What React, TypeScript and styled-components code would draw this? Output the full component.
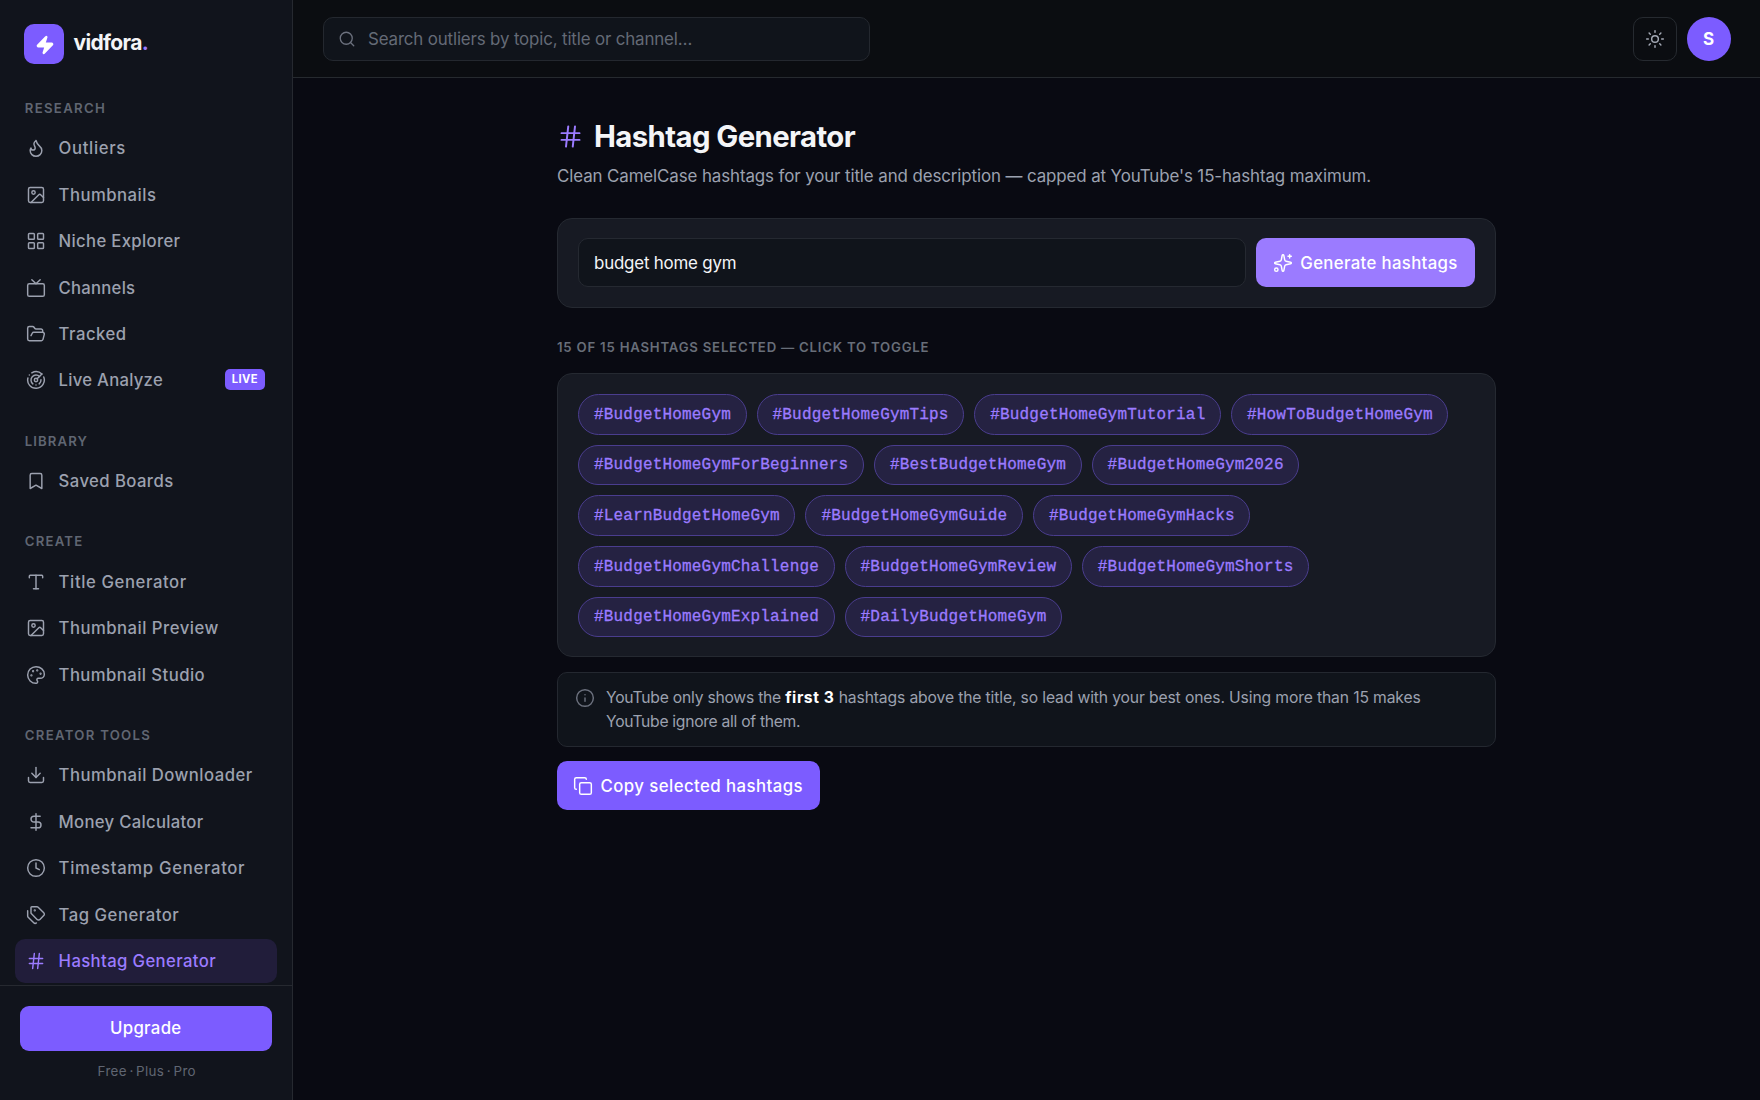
import React, { useState } from "react";
import styled, { createGlobalStyle } from "styled-components";
import {
  Bookmark,
  Clock,
  Copy,
  DollarSign,
  Download,
  Flame,
  FolderOpen,
  Hash,
  Image,
  Info,
  LayoutGrid,
  LucideIcon,
  Palette,
  Radar,
  Search,
  Sparkles,
  Sun,
  Tags,
  Tv,
  Type,
  Zap,
} from "lucide-react";

const GlobalStyle = createGlobalStyle`
  * { box-sizing: border-box; }
  body {
    margin: 0;
    background: #090a12;
    color: #f4f5f7;
    font-family: Inter, "Liberation Sans", sans-serif;
    overflow: hidden;
  }
  button, input { font-family: inherit; margin: 0; }
`;

const Shell = styled.div`
  display: grid;
  grid-template-columns: 293px 1fr;
  width: 100%;
  height: 1100px;
  overflow: hidden;
`;

/* ---------- Sidebar ---------- */

const Sidebar = styled.aside`
  display: flex;
  flex-direction: column;
  min-height: 0;
  height: 1100px;
  background: #11141c;
  border-right: 1px solid #262930;
`;

const Brand = styled.div`
  display: flex;
  align-items: center;
  gap: 9.5px;
  padding: 24px 24px 0;
`;

const BrandMark = styled.div`
  display: grid;
  place-items: center;
  width: 40px;
  height: 40px;
  padding: 1px 0 0 1px;
  border-radius: 10px;
  background: #7c5cff;
  color: #fff;
`;

const BrandName = styled.div`
  font-size: 21px;
  font-weight: 700;
  line-height: 26px;
  letter-spacing: -0.65px;
  padding-bottom: 2px;
  span { color: #9b7bff; }
`;

const Nav = styled.nav`
  flex: 1;
  min-height: 0;
  overflow: hidden;
  padding: 33.7px 15px 0;
`;

const Group = styled.section`
  margin-bottom: 28.2px;
`;

const GroupLabel = styled.h2<{ $track: number }>`
  margin: 0;
  padding: 0 0 7px 9.8px;
  height: 28.5px;
  font-size: 13.2px;
  font-weight: 600;
  line-height: 21.4px;
  letter-spacing: ${(p) => p.$track}px;
  color: #606672;
`;

const NavItem = styled.a<{ $active?: boolean; $track: number }>`
  display: flex;
  align-items: center;
  gap: 12.4px;
  height: 44px;
  margin-bottom: 2.44px;
  padding: 0 12px 0 11.2px;
  border-radius: 10px;
  font-size: 16.7px;
  font-weight: 500;
  letter-spacing: ${(p) => p.$track}px;
  white-space: nowrap;
  color: ${(p) => (p.$active ? "#9b7bff" : "#9ca1af")};
  background: ${(p) => (p.$active ? "#211d3a" : "transparent")};
  svg { flex: none; }
`;

const LiveBadge = styled.span`
  margin-left: auto;
  margin-top: -1px;
  padding: 0 7px 1px;
  border-radius: 5px;
  background: #7c5cff;
  color: #fff;
  font-size: 11.2px;
  font-weight: 700;
  line-height: 20px;
  letter-spacing: 0.4px;
`;

const SidebarFooter = styled.div`
  height: 115px;
  padding: 20px 20px 0 19.5px;
  border-top: 1px solid #262930;
  text-align: center;
`;

const UpgradeButton = styled.button`
  display: block;
  width: 100%;
  height: 45px;
  padding: 0 0 1px;
  border: 0;
  border-radius: 9px;
  background: #7c5cff;
  color: #fff;
  font-size: 16.8px;
  font-weight: 550;
  letter-spacing: 0.3px;
`;

const PlanNote = styled.div`
  margin-top: 10px;
  padding-left: 2px;
  font-size: 13.4px;
  line-height: 20px;
  letter-spacing: 0.35px;
  word-spacing: -1.6px;
  color: #606672;
`;

/* ---------- Top bar ---------- */

const Main = styled.div`
  display: flex;
  flex-direction: column;
  min-width: 0;
`;

const TopBar = styled.header`
  display: flex;
  align-items: center;
  justify-content: space-between;
  height: 78px;
  flex: none;
  padding: 0 29.5px 0 30px;
  background: #0b0d11;
  border-bottom: 1px solid #262a2f;
`;

const SearchBox = styled.label`
  display: flex;
  align-items: center;
  gap: 12.5px;
  width: 547px;
  height: 44px;
  padding: 0 13.5px;
  border: 1px solid #24282f;
  border-radius: 10px;
  background: #10141b;
  color: #6c717e;
`;

const SearchInput = styled.input`
  flex: 1;
  min-width: 0;
  padding: 1px 0 0;
  border: 0;
  outline: 0;
  background: none;
  color: #f4f5f7;
  font-size: 16.9px;
  letter-spacing: -0.15px;
  &::placeholder { color: #646a76; opacity: 1; }
`;

const Actions = styled.div`
  display: flex;
  gap: 10px;
`;

const ThemeButton = styled.button`
  display: grid;
  place-items: center;
  width: 44px;
  height: 44px;
  padding: 0;
  border: 1px solid #262a30;
  border-radius: 10px;
  background: none;
  color: #a4a9b5;
`;

const Avatar = styled.div`
  display: grid;
  place-items: center;
  width: 44px;
  height: 44px;
  border-radius: 50%;
  background: #7c5cff;
  font-size: 17px;
  font-weight: 700;
  color: #fff;
`;

/* ---------- Page ---------- */

const Page = styled.main`
  width: 939px;
  margin: 0 auto;
  padding-top: 39px;
`;

const Title = styled.h1`
  display: flex;
  align-items: center;
  gap: 10px;
  margin: 0;
  height: 40px;
  font-size: 29.3px;
  font-weight: 700;
  line-height: 40px;
  letter-spacing: -0.58px;
  svg { color: #9b7bff; margin-top: -1px; }
`;

const Subtitle = styled.p`
  margin: 7px 0 0;
  font-size: 16.9px;
  line-height: 25px;
  letter-spacing: -0.1px;
  white-space: nowrap;
  color: #9ca1af;
`;

const Card = styled.section`
  padding: 20px;
  border: 1px solid #252931;
  border-radius: 15px;
  background: #171a23;
`;

const FormCard = styled(Card)`
  display: flex;
  gap: 10px;
  margin-top: 29px;
  height: 90px;
  padding: 19px 20px;
`;

const TopicInput = styled.input`
  flex: 1;
  min-width: 0;
  height: 49px;
  padding: 0 15px;
  border: 1px solid #252931;
  border-radius: 10px;
  outline: 0;
  background: #10141b;
  color: #f4f5f7;
  font-size: 16.9px;
  letter-spacing: -0.2px;
`;

const Button = styled.button<{ $tone: string; $width: number; $track: number }>`
  display: flex;
  align-items: center;
  justify-content: center;
  gap: 7px;
  width: ${(p) => p.$width}px;
  height: 49px;
  padding: 0;
  border: 0;
  border-radius: 10px;
  background: ${(p) => p.$tone};
  color: #fff;
  font-size: 16.8px;
  font-weight: 550;
  letter-spacing: ${(p) => p.$track}px;
  white-space: nowrap;
`;

const ResultLabel = styled.h2`
  margin: 29px 0 16px;
  font-size: 13.2px;
  font-weight: 600;
  line-height: 20px;
  letter-spacing: 0.78px;
  color: #686e79;
`;

const ChipCard = styled(Card)`
  display: flex;
  flex-wrap: wrap;
  gap: 10px;
  height: 284px;
  align-content: flex-start;
`;

const Chip = styled.button<{ $on: boolean }>`
  height: 40.65px;
  padding: 0.6px 14.6px 0 15px;
  border: 1px solid ${(p) => (p.$on ? "#4a3d8e" : "#2b2f38")};
  border-radius: 21px;
  background: ${(p) => (p.$on ? "#252242" : "transparent")};
  color: ${(p) => (p.$on ? "#9b7bff" : "#9ca1af")};
  font-family: "Liberation Mono", monospace;
  font-size: 16px;
  letter-spacing: 0.18px;
  -webkit-text-stroke: 0.3px currentColor;
`;

const Note = styled.div`
  display: flex;
  gap: 11px;
  height: 75px;
  margin-top: 15px;
  padding: 12.5px 17px;
  border: 1px solid #242830;
  border-radius: 10px;
  background: #10141b;
  color: #9ca1af;
  font-size: 15.7px;
  line-height: 24.6px;
  svg { flex: none; margin-top: 2px; color: #6c717e; }
  p { margin: 0; }
  strong { font-weight: 700; letter-spacing: 0.55px; color: #fff; }
`;

const Run = styled.span<{ $track: number }>`
  letter-spacing: ${(p) => p.$track}px;
`;

const CopyRow = styled.div`
  margin-top: 14px;
`;

type Item = { icon: LucideIcon; text: string; track: number; live?: boolean; active?: boolean };

const groups: { label: string; track: number; items: Item[] }[] = [
  {
    label: "RESEARCH",
    track: 1.3,
    items: [
      { icon: Flame, text: "Outliers", track: 0.65 },
      { icon: Image, text: "Thumbnails", track: 0.48 },
      { icon: LayoutGrid, text: "Niche Explorer", track: 0.33 },
      { icon: Tv, text: "Channels", track: 0.24 },
      { icon: FolderOpen, text: "Tracked", track: 0.5 },
      { icon: Radar, text: "Live Analyze", track: 0.26, live: true },
    ],
  },
  {
    label: "LIBRARY",
    track: 1.08,
    items: [{ icon: Bookmark, text: "Saved Boards", track: 0.42 }],
  },
  {
    label: "CREATE",
    track: 1.2,
    items: [
      { icon: Type, text: "Title Generator", track: 0.6 },
      { icon: Image, text: "Thumbnail Preview", track: 0.48 },
      { icon: Palette, text: "Thumbnail Studio", track: 0.43 },
    ],
  },
  {
    label: "CREATOR TOOLS",
    track: 1.28,
    items: [
      { icon: Download, text: "Thumbnail Downloader", track: 0.47 },
      { icon: DollarSign, text: "Money Calculator", track: 0.29 },
      { icon: Clock, text: "Timestamp Generator", track: 0.69 },
      { icon: Tags, text: "Tag Generator", track: 0.52 },
      { icon: Hash, text: "Hashtag Generator", track: 0.38, active: true },
    ],
  },
];

const hashtags = [
  "#BudgetHomeGym",
  "#BudgetHomeGymTips",
  "#BudgetHomeGymTutorial",
  "#HowToBudgetHomeGym",
  "#BudgetHomeGymForBeginners",
  "#BestBudgetHomeGym",
  "#BudgetHomeGym2026",
  "#LearnBudgetHomeGym",
  "#BudgetHomeGymGuide",
  "#BudgetHomeGymHacks",
  "#BudgetHomeGymChallenge",
  "#BudgetHomeGymReview",
  "#BudgetHomeGymShorts",
  "#BudgetHomeGymExplained",
  "#DailyBudgetHomeGym",
];

export default function App() {
  const [off, setOff] = useState<string[]>([]);
  const toggle = (tag: string) =>
    setOff((cur) => (cur.includes(tag) ? cur.filter((t) => t !== tag) : [...cur, tag]));

  return (
    <>
      <GlobalStyle />
      <Shell>
        <Sidebar>
          <Brand>
            <BrandMark>
              <Zap size={20} strokeWidth={2} fill="currentColor" />
            </BrandMark>
            <BrandName>
              vidfora<span>.</span>
            </BrandName>
          </Brand>
          <Nav>
            {groups.map((group) => (
              <Group key={group.label}>
                <GroupLabel $track={group.track}>{group.label}</GroupLabel>
                {group.items.map(({ icon: Icon, text, track, live, active }) => (
                  <NavItem key={text} $active={active} $track={track}>
                    <Icon size={20} strokeWidth={1.75} />
                    {text}
                    {live && <LiveBadge>LIVE</LiveBadge>}
                  </NavItem>
                ))}
              </Group>
            ))}
          </Nav>
          <SidebarFooter>
            <UpgradeButton>Upgrade</UpgradeButton>
            <PlanNote>Free · Plus · Pro</PlanNote>
          </SidebarFooter>
        </Sidebar>

        <Main>
          <TopBar>
            <SearchBox>
              <Search size={18} strokeWidth={1.75} />
              <SearchInput placeholder="Search outliers by topic, title or channel…" />
            </SearchBox>
            <Actions>
              <ThemeButton aria-label="Toggle theme">
                <Sun size={20} strokeWidth={1.75} />
              </ThemeButton>
              <Avatar>S</Avatar>
            </Actions>
          </TopBar>

          <Page>
            <Title>
              <Hash size={27} strokeWidth={1.75} />
              Hashtag Generator
            </Title>
            <Subtitle>
              Clean CamelCase hashtags for your title and description — capped at YouTube's
              15-hashtag maximum.
            </Subtitle>

            <FormCard>
              <TopicInput defaultValue="budget home gym" />
              <Button $tone="#9b7bff" $width={219} $track={0.34}>
                <Sparkles size={20} strokeWidth={1.75} />
                Generate hashtags
              </Button>
            </FormCard>

            <ResultLabel>
              {hashtags.length - off.length} OF {hashtags.length} HASHTAGS SELECTED — CLICK TO TOGGLE
            </ResultLabel>
            <ChipCard>
              {hashtags.map((tag) => (
                <Chip key={tag} $on={!off.includes(tag)} onClick={() => toggle(tag)}>
                  {tag}
                </Chip>
              ))}
            </ChipCard>

            <Note>
              <Info size={20} strokeWidth={1.75} />
              <p>
                <Run $track={-0.24}>YouTube only shows the </Run>
                <strong>first 3</strong>
                <Run $track={-0.14}>
                  {" "}
                  hashtags above the title, so lead with your best ones. Using more than 15 makes{" "}
                </Run>
                <Run $track={-0.3}>YouTube ignore all of them.</Run>
              </p>
            </Note>

            <CopyRow>
              <Button $tone="#7c5cff" $width={262.5} $track={0.43}>
                <Copy size={20} strokeWidth={1.75} />
                Copy selected hashtags
              </Button>
            </CopyRow>
          </Page>
        </Main>
      </Shell>
    </>
  );
}
